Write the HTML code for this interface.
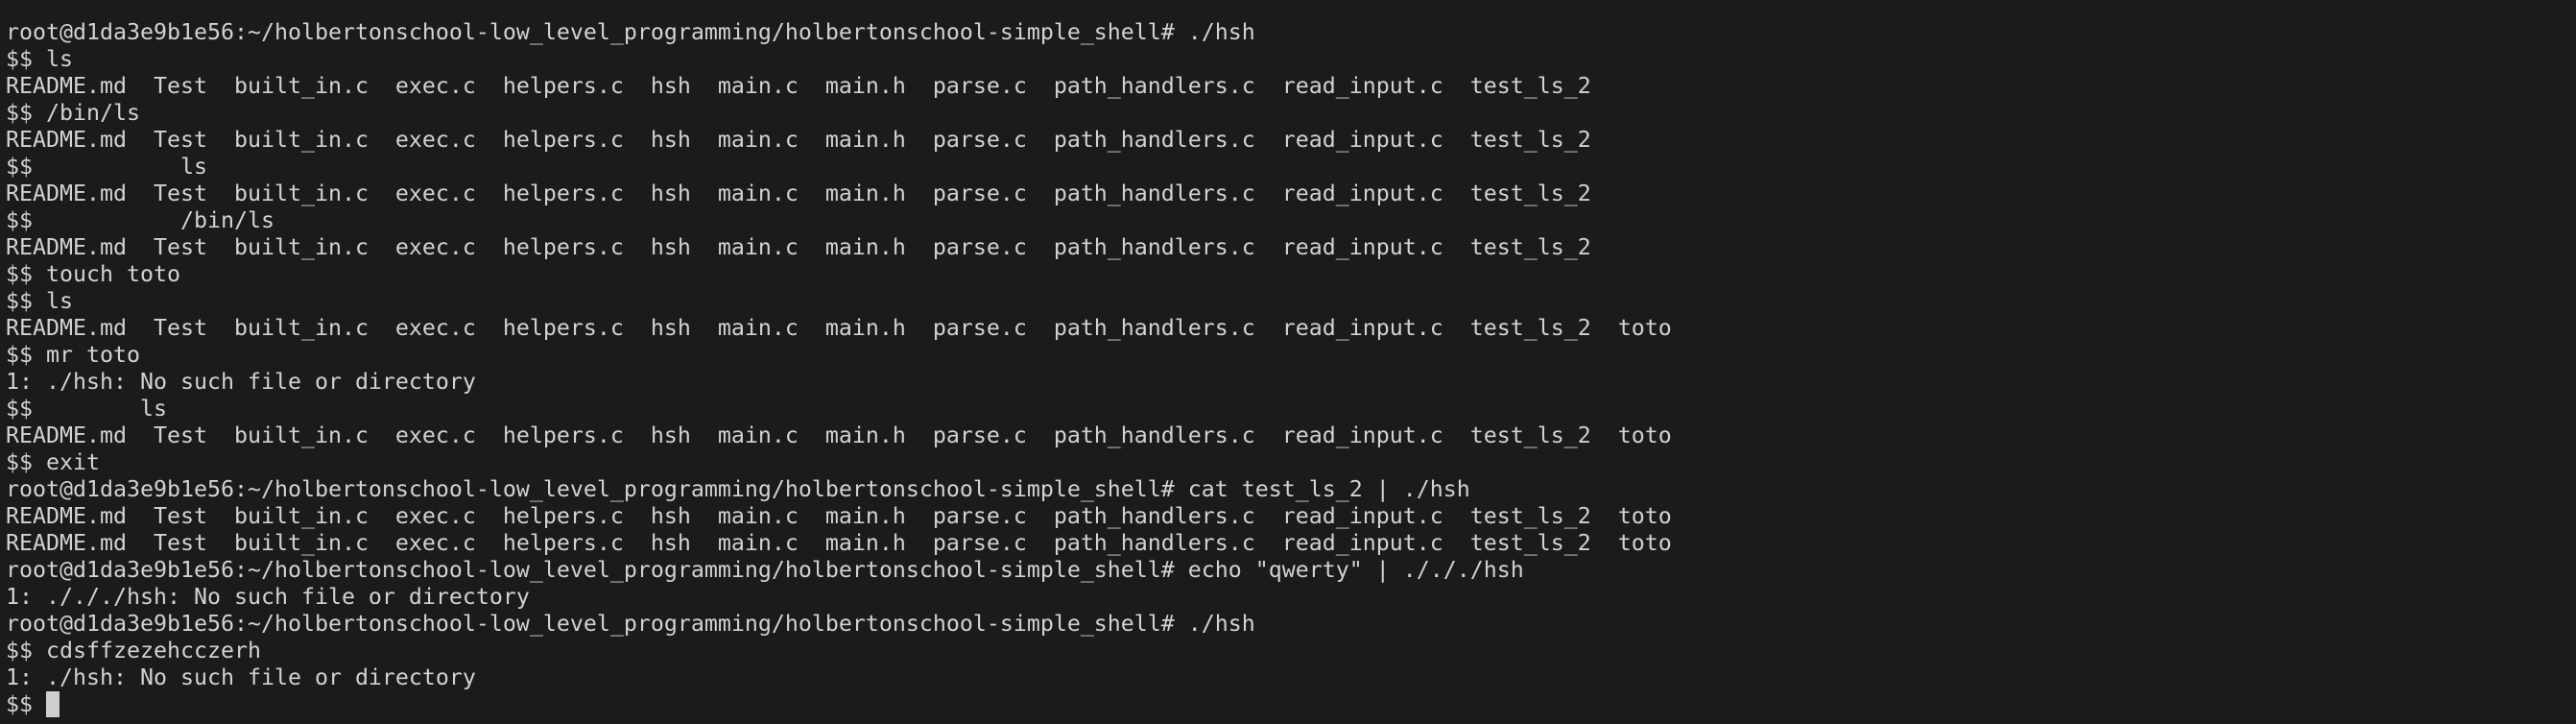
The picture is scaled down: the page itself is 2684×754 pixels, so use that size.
<!DOCTYPE html>
<html><head><style>
html,body{margin:0;padding:0;background:#1b1b1b;width:2684px;height:754px;overflow:hidden}
pre{margin:0;position:absolute;left:6px;top:20px;font-family:"DejaVu Sans Mono","Liberation Mono",monospace;font-size:23.25px;line-height:28px;color:#d2d2d2}
.c{display:inline-block;width:14px;height:27px;background:#cfcfcf;vertical-align:top}
</style></head><body><pre>root@d1da3e9b1e56:~/holbertonschool-low_level_programming/holbertonschool-simple_shell# ./hsh
$$ ls
README.md  Test  built_in.c  exec.c  helpers.c  hsh  main.c  main.h  parse.c  path_handlers.c  read_input.c  test_ls_2
$$ /bin/ls
README.md  Test  built_in.c  exec.c  helpers.c  hsh  main.c  main.h  parse.c  path_handlers.c  read_input.c  test_ls_2
$$           ls
README.md  Test  built_in.c  exec.c  helpers.c  hsh  main.c  main.h  parse.c  path_handlers.c  read_input.c  test_ls_2
$$           /bin/ls
README.md  Test  built_in.c  exec.c  helpers.c  hsh  main.c  main.h  parse.c  path_handlers.c  read_input.c  test_ls_2
$$ touch toto
$$ ls
README.md  Test  built_in.c  exec.c  helpers.c  hsh  main.c  main.h  parse.c  path_handlers.c  read_input.c  test_ls_2  toto
$$ mr toto
1: ./hsh: No such file or directory
$$        ls
README.md  Test  built_in.c  exec.c  helpers.c  hsh  main.c  main.h  parse.c  path_handlers.c  read_input.c  test_ls_2  toto
$$ exit
root@d1da3e9b1e56:~/holbertonschool-low_level_programming/holbertonschool-simple_shell# cat test_ls_2 | ./hsh
README.md  Test  built_in.c  exec.c  helpers.c  hsh  main.c  main.h  parse.c  path_handlers.c  read_input.c  test_ls_2  toto
README.md  Test  built_in.c  exec.c  helpers.c  hsh  main.c  main.h  parse.c  path_handlers.c  read_input.c  test_ls_2  toto
root@d1da3e9b1e56:~/holbertonschool-low_level_programming/holbertonschool-simple_shell# echo "qwerty" | ./././hsh
1: ./././hsh: No such file or directory
root@d1da3e9b1e56:~/holbertonschool-low_level_programming/holbertonschool-simple_shell# ./hsh
$$ cdsffzezehcczerh
1: ./hsh: No such file or directory
$$ <span class="c"></span></pre></body></html>
